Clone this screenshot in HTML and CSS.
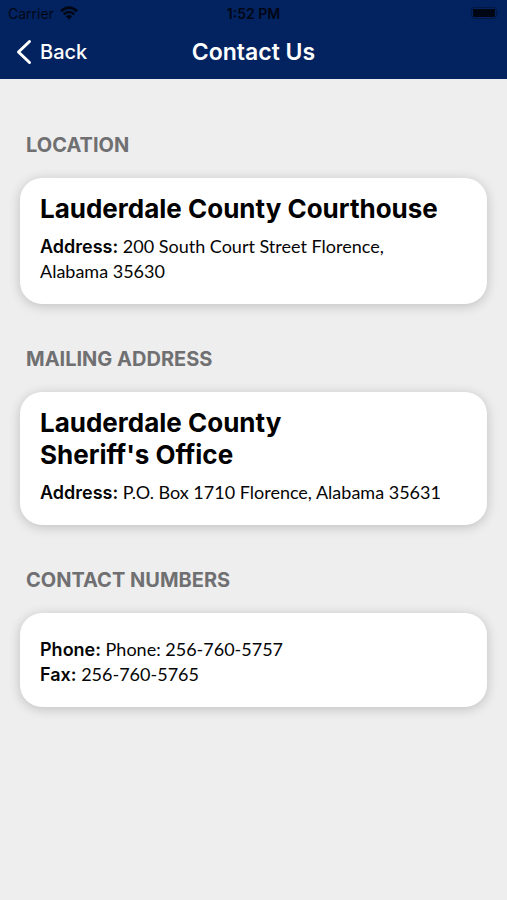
FILE: index.html
```html
<!DOCTYPE html>
<html lang="en">
<head>
<meta charset="utf-8">
<meta name="viewport" content="width=device-width, initial-scale=1">
<title>Contact Us</title>
<link rel="stylesheet" href="styles.css">
</head>
<body>
<header class="top">
  <div class="status">
    <span class="carrier">Carrier
      <svg class="wifi" viewBox="0 0 18 14" aria-hidden="true"><path d="M1 5.200Q9-2 17 5.200M3.800 8.300Q9 3.700 14.200 8.300" fill="none" stroke="currentColor" stroke-width="2.600"/><path d="M5.800 10.200Q9 7.600 12.200 10.200L9 13.400z" fill="currentColor"/></svg>
    </span>
    <span class="time">1:52 PM</span>
    <svg class="battery" viewBox="0 0 28 12" aria-hidden="true"><rect x="0.500" y="0.500" width="25" height="11" rx="3" fill="none" stroke="currentColor" stroke-opacity="0.350"/><rect x="2" y="2" width="22" height="8" rx="1" fill="currentColor"/><path d="M26.500 4q1.500 2 0 4z" fill="currentColor" fill-opacity="0.350"/></svg>
  </div>
  <nav class="bar">
    <button class="back" type="button"><svg class="chevron" viewBox="0 0 16 26" aria-hidden="true"><path d="M13.500 2.500L2.500 13l11 10.500" fill="none" stroke="currentColor" stroke-width="3" stroke-linecap="round" stroke-linejoin="round"/></svg>Back</button>
    <h1 class="title">Contact Us</h1>
  </nav>
</header>
<main class="content">
  <section>
    <h2 class="label">LOCATION</h2>
    <div class="card">
      <h3 class="name">Lauderdale County Courthouse</h3>
      <p class="detail"><b>Address:</b> 200 South Court Street Florence,<br>Alabama 35630</p>
    </div>
  </section>
  <section>
    <h2 class="label">MAILING ADDRESS</h2>
    <div class="card">
      <h3 class="name">Lauderdale County<br>Sheriff's Office</h3>
      <p class="detail"><b>Address:</b> P.O. Box 1710 Florence, Alabama 35631</p>
    </div>
  </section>
  <section>
    <h2 class="label">CONTACT NUMBERS</h2>
    <div class="card numbers">
      <p class="detail"><b>Phone:</b> Phone: 256-760-5757</p>
      <p class="detail"><b>Fax:</b> 256-760-5765</p>
    </div>
  </section>
</main>
</body>
</html>
```
FILE: styles.css
```css
* { box-sizing: border-box; }
body {
  margin: 0;
  min-height: 100vh;
  background: #eeeeee;
  color: #050505;
  font-family: Inter, "Liberation Sans", sans-serif;
}
h1, h2, h3, p { margin: 0; }
.top { background: #02235f; color: #fff; }
.status {
  display: grid;
  grid-template-columns: 1fr auto 1fr;
  align-items: center;
  height: 26px;
  padding: 0 8px;
  color: #000614;
  font-size: 14px;
}
.carrier { display: flex; align-items: center; gap: 6px; }
.wifi { width: 18px; height: 14px; }
.time { font-weight: 600; }
.battery { width: 28px; height: 12px; justify-self: end; }
.bar {
  display: grid;
  grid-template-columns: 1fr auto 1fr;
  align-items: center;
  height: 53px;
  padding: 0 16px 2px;
}
.back {
  display: flex;
  align-items: center;
  justify-self: start;
  gap: 8px;
  padding: 0;
  border: 0;
  background: none;
  color: inherit;
  font: 500 20px/24px Inter, "Liberation Sans", sans-serif;
}
.chevron { width: 16px; height: 26px; }
.title { font-size: 23px; line-height: 28px; font-weight: 600; }
.content { padding: 53px 20px 40px; display: grid; gap: 42px; }
.label {
  margin: 0 0 20px 6px;
  color: #707072;
  font-size: 20px;
  line-height: 26px;
  font-weight: 700;
}
.card {
  padding: 15px 20px 20px;
  border-radius: 22px;
  background: #fff;
  box-shadow: 0 2px 12px rgba(0, 0, 0, 0.2);
}
.name { margin-bottom: 9px; color: #000; font-size: 26px; line-height: 32px; font-weight: 700; }
.detail { font-family: Lato, "Liberation Sans", sans-serif; font-size: 18px; line-height: 25px; }
.detail b { font-family: Inter, "Liberation Sans", sans-serif; font-weight: 600; }
.numbers { padding: 24px 20px 20px; }
```
